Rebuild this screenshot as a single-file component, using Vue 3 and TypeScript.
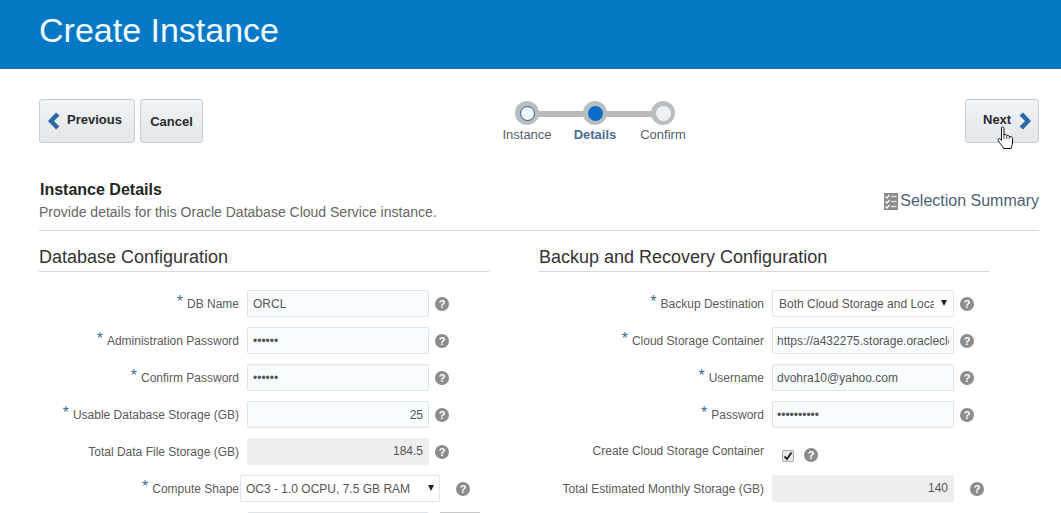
<script setup lang="ts">
interface Field {
  label: string;
  required?: boolean;
  kind: "text" | "password" | "number" | "readonly" | "select" | "check";
  value?: string;
  wide?: boolean;
  farHelp?: boolean;
}

const leftFields: Field[] = [
  { label: "DB Name", required: true, kind: "text", value: "ORCL" },
  { label: "Administration Password", required: true, kind: "password", value: "secret" },
  { label: "Confirm Password", required: true, kind: "password", value: "secret" },
  { label: "Usable Database Storage (GB)", required: true, kind: "number", value: "25" },
  { label: "Total Data File Storage (GB)", kind: "readonly", value: "184.5" },
  { label: "Compute Shape", required: true, kind: "select", value: "OC3 - 1.0 OCPU, 7.5 GB RAM", wide: true },
];

const rightFields: Field[] = [
  { label: "Backup Destination", required: true, kind: "select", value: "Both Cloud Storage and Local Storage" },
  { label: "Cloud Storage Container", required: true, kind: "text", value: "https://a432275.storage.oraclecloud.com/v1" },
  { label: "Username", required: true, kind: "text", value: "dvohra10@yahoo.com" },
  { label: "Password", required: true, kind: "password", value: "secretpass" },
  { label: "Create Cloud Storage Container", kind: "check" },
  { label: "Total Estimated Monthly Storage (GB)", kind: "readonly", value: "140", farHelp: true },
];

const columns = [
  { title: "Database Configuration", fields: leftFields, cls: "col-left" },
  { title: "Backup and Recovery Configuration", fields: rightFields, cls: "col-right" },
];

const steps = [
  { name: "Instance", state: "done" },
  { name: "Details", state: "current" },
  { name: "Confirm", state: "todo" },
];
</script>

<template>
  <div class="page">
    <header class="banner"><h1>Create Instance</h1></header>

    <main class="content">
      <div class="train-bar">
        <div class="btn-group">
          <button class="btn btn-prev">
            <svg class="chev" width="13" height="18" viewBox="0 0 13 18"><path d="M9 0.5 L12.5 3.5 L7 9 L12.5 14.5 L9 17.5 L1 9 Z" fill="#2a6aa6" /></svg>
            <span class="lift">Previous</span>
          </button>
          <button class="btn btn-cancel">Cancel</button>
        </div>

        <div class="train">
          <div class="track"></div>
          <div v-for="s in steps" :key="s.name" class="step" :class="s.state">
            <span class="ring"><span class="dot"></span></span>
            <span class="step-name">{{ s.name }}</span>
          </div>
        </div>

        <button class="btn btn-next">
          <span class="lift">Next</span>
          <svg class="chev" width="13" height="18" viewBox="0 0 13 18"><path d="M4 0.5 L0.5 3.5 L6 9 L0.5 14.5 L4 17.5 L12 9 Z" fill="#2a6aa6" /></svg>
          <svg class="cursor" width="17" height="24" viewBox="0 0 17 24">
            <path d="M4.5 1.5 C5.5 0.5 7 1 7 2.5 L7 9 C8 8 9.5 8.5 9.8 9.6 C10.8 9 12 9.5 12.3 10.6 C13.3 10.2 15.5 10.6 15.5 12.5 L15.5 17 C15.5 19 14.5 20 14.2 22.5 L6.5 22.5 C6 20 2.5 17.5 1.2 14.5 C0.6 13 2 12 3.2 13 L4.5 14.5 Z" fill="#fff" stroke="#111" stroke-width="1" stroke-linejoin="round" />
            <path d="M7 9 V13 M9.8 9.6 V13 M12.3 10.6 V13" fill="none" stroke="#111" stroke-width="0.8" />
          </svg>
        </button>
      </div>

      <section class="details-head">
        <div>
          <h2>Instance Details</h2>
          <p>Provide details for this Oracle Database Cloud Service instance.</p>
        </div>
        <a class="summary">
          <svg width="14" height="17" viewBox="0 0 14 17">
            <rect width="14" height="17" fill="#8a8a8a" />
            <path d="M1.5 3.5 L3 5 L5.5 2 M1.5 8.5 L3 10 L5.5 7 M1.5 13.5 L3 15 L5.5 12" fill="none" stroke="#fff" stroke-width="1.2" />
            <path d="M7 3.5 H12.5 M7 8.5 H12.5 M7 13.5 H12.5" stroke="#ddd" stroke-width="1.5" />
          </svg>
          <span>Selection Summary</span>
        </a>
      </section>

      <div class="columns">
        <section v-for="col in columns" :key="col.title" class="form-col" :class="col.cls">
          <h3>{{ col.title }}</h3>
          <div class="rows">
            <div v-for="f in col.fields" :key="f.label" class="row" :class="{ 'row-wide': f.wide }">
              <label class="lbl" :class="{ 'lbl-check': f.kind === 'check' }">
                <span v-if="f.required" class="req">*</span>{{ f.label }}
              </label>
              <div v-if="f.kind === 'select'" class="field select">
                <span class="select-text">{{ f.value }}</span>
                <span class="caret"></span>
              </div>
              <div v-else-if="f.kind === 'readonly'" class="field readonly">{{ f.value }}</div>
              <span v-else-if="f.kind === 'check'" class="check-wrap">
                <span class="check">
                  <svg width="10" height="10" viewBox="0 0 10 10"><path d="M1.5 5.5 L4 8 L8.5 1.5" fill="none" stroke="#222" stroke-width="1.8" /></svg>
                </span>
              </span>
              <input
                v-else
                class="field input"
                :class="{ num: f.kind === 'number' }"
                :type="f.kind === 'password' ? 'password' : 'text'"
                :value="f.value"
                readonly
              />
              <span class="help" :class="{ 'help-far': f.farHelp || f.wide, 'help-check': f.kind === 'check' }">?</span>
            </div>
            <div v-if="col.cls === 'col-left'" class="row">
              <span class="lbl"></span>
              <div class="field input"></div>
              <span class="stub"></span>
            </div>
          </div>
        </section>
      </div>
    </main>
  </div>
</template>

<style>
html, body { margin: 0; height: 513px; overflow: hidden; background: #fff; }
</style>

<style scoped>
.page {
  width: 1061px;
  height: 513px;
  overflow: hidden;
  font-family: "Liberation Sans", Arial, sans-serif;
  color: #555;
}
.banner {
  height: 69px;
  box-sizing: border-box;
  background: #0678c6;
  border-bottom: 1px solid #1f6fa8;
  display: flex;
  align-items: center;
  padding-left: 39px;
}
.banner h1 {
  margin: -7px 0 0;
  font-size: 34px;
  font-weight: 400;
  color: #f0fbff;
}
.content { padding: 0 22px 0 39px; }

.train-bar {
  display: flex;
  align-items: flex-start;
  padding-top: 30px;
  height: 105px;
  box-sizing: border-box;
}
.btn-group { display: flex; gap: 5px; }
.btn {
  height: 44px;
  box-sizing: border-box;
  border: 1px solid #c4ced7;
  border-radius: 3px;
  background: linear-gradient(#f1f3f5, #e3e7ea);
  font: bold 13px "Liberation Sans", Arial, sans-serif;
  color: #2a2a2a;
  display: flex;
  align-items: center;
  padding: 0;
}
.btn-prev { width: 96px; padding-left: 7px; gap: 7px; }
.btn-cancel { width: 63px; justify-content: center; }
.btn-next { position: relative; width: 74px; padding-left: 17px; gap: 8px; margin-left: auto; }
.lift { position: relative; top: -2px; }
.chev { flex: none; }
.cursor { position: absolute; left: 31px; top: 26px; }

.train {
  position: relative;
  width: 204px;
  margin-left: 290px;
  display: flex;
  padding-top: 2px;
}
.track {
  position: absolute;
  left: 34px;
  right: 34px;
  top: 12px;
  height: 6px;
  background: #b9b9b9;
}
.step {
  position: relative;
  width: 68px;
  display: flex;
  flex-direction: column;
  align-items: center;
  gap: 2px;
}
.ring {
  width: 24px;
  height: 24px;
  box-sizing: border-box;
  border-radius: 50%;
  background: #b9bec2;
  display: flex;
  align-items: center;
  justify-content: center;
}
.dot { width: 15px; height: 15px; box-sizing: border-box; border-radius: 50%; }
.done .dot { background: #eef7fb; border: 1px solid #2c5a80; }
.current .dot { background: #0a6cc8; }
.todo .dot { background: #eef1f5; }
.step-name { font-size: 13px; line-height: 16px; color: #56606a; white-space: nowrap; }
.current .step-name { font-weight: bold; color: #4a6c94; }

.details-head {
  display: flex;
  justify-content: space-between;
  align-items: flex-end;
  border-bottom: 1px solid #d9d9d9;
  height: 57px;
  box-sizing: border-box;
  padding-bottom: 10px;
}
.details-head h2 {
  margin: 0 0 3px 1px;
  font-size: 16px;
  line-height: 20px;
  color: #252525;
}
.details-head p { margin: 0; position: relative; top: 1px; font-size: 14px; line-height: 17px; color: #666; }
.summary {
  display: flex;
  align-items: center;
  gap: 2px;
  font-size: 16px;
  line-height: 20px;
  color: #4b6273;
  margin-bottom: 9px;
}

.columns { display: flex; gap: 50px; padding-top: 14px; }
.form-col { width: 450px; }
.form-col h3 {
  margin: 0;
  height: 27px;
  box-sizing: border-box;
  border-bottom: 1px solid #d9d9d9;
  font-size: 18px;
  font-weight: 400;
  line-height: 24px;
  color: #333;
}
.rows { display: flex; flex-direction: column; gap: 10px; padding-top: 18px; }
.row { display: flex; align-items: center; height: 27px; }
.lbl {
  flex: none;
  box-sizing: border-box;
  font-size: 12px;
  text-align: right;
  white-space: nowrap;
  color: #5a5a5a;
}
.col-left .lbl { width: 200px; margin-right: 8px; }
.col-right .lbl { width: 225px; margin-right: 8px; }
.req { color: #3f6f8f; font-size: 16px; margin-right: 4px; position: relative; top: -1px; line-height: 12px; }
.lbl-check { position: relative; top: -1px; }

.field {
  width: 182px;
  height: 27px;
  box-sizing: border-box;
  flex: none;
  font: 12px "Liberation Sans", Arial, sans-serif;
  color: #555;
  border-radius: 2px;
}
.input {
  border: 1px solid #dfe4e8;
  background: #f8fcfe;
  padding: 0 5px;
  outline: none;
}
.col-right .input { padding: 0 4px; }
.num { text-align: right; }
.readonly {
  background: #eeeeee;
  line-height: 27px;
  text-align: right;
  padding-right: 6px;
}
.select {
  border: 1px solid #dfe4e8;
  background: #fff;
  display: flex;
  align-items: center;
  padding-left: 6px;
  position: relative;
}
.select-text { width: 155px; overflow: hidden; white-space: nowrap; }
.caret {
  position: absolute;
  right: 6px;
  top: 9px;
  border-left: 3.5px solid transparent;
  border-right: 3.5px solid transparent;
  border-top: 6px solid #222;
}
.col-left .row-wide .lbl { width: 200px; margin-right: 1px; }
.row-wide .field { width: 200px; padding-left: 5px; }
.row-wide .select-text { width: 180px; }
.row-wide .caret { right: 5px; }

.check-wrap { display: flex; width: 33px; padding-left: 10px; box-sizing: border-box; position: relative; top: 4px; }
.check {
  width: 12px;
  height: 12px;
  box-sizing: border-box;
  border: 1px solid #aaa;
  border-radius: 2px;
  background: #e8e8e8;
  display: flex;
  align-items: center;
  justify-content: center;
}
.help {
  flex: none;
  width: 14px;
  height: 14px;
  margin-left: 6px;
  border-radius: 50%;
  background: #8c8c8c;
  color: #fff;
  font-size: 11px;
  font-weight: bold;
  line-height: 14px;
  text-align: center;
}
.help-far { margin-left: 16px !important; }
.help-check { margin-left: -1px; position: relative; top: 3px; }
.stub {
  width: 40px;
  height: 27px;
  box-sizing: border-box;
  margin-left: 11px;
  border: 1px solid #c8c8c8;
  background: #eee;
}
</style>
